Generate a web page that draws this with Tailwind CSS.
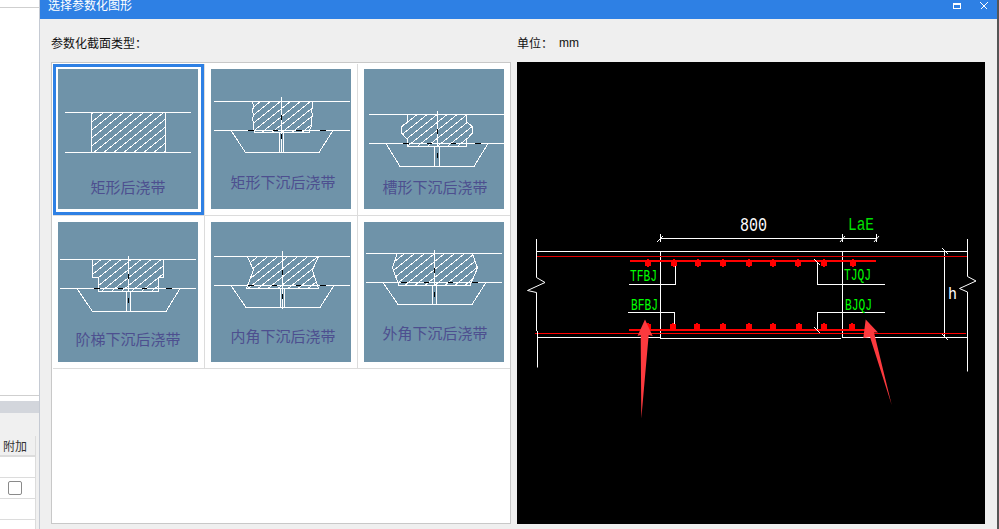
<!DOCTYPE html>
<html lang="zh-CN">
<head>
    <meta charset="UTF-8">
    <meta name="viewport" content="width=device-width, initial-scale=1.0">
    <title>选择参数化图形</title>
    <script src="https://cdn.jsdelivr.net/npm/@tailwindcss/browser@4"></script>
</head>
<body class="bg-white">
    <!-- shared shapes: thumbnail hatch and rebar dot -->
    <svg width="0" height="0" class="absolute">
        <defs>
            <pattern id="hatch" width="10" height="8" patternUnits="userSpaceOnUse">
                <path d="M0 8L10 0" stroke="#fff" stroke-width="1" fill="none" shape-rendering="crispEdges"/>
            </pattern>
            <g id="dot" fill="#f00" stroke="none" shape-rendering="crispEdges">
                <rect x="-3" y="-3" width="6" height="6"/>
                <rect x="-1" y="-4" width="2" height="8"/>
            </g>
        </defs>
    </svg>

    <div class="flex w-[999px] h-[529px] overflow-hidden font-['Noto_Sans_CJK_SC','Noto_Sans',sans-serif]">
        <!-- window behind the dialog -->
        <div class="w-[39px] h-full flex flex-col bg-white">
            <div class="h-[8px] border-b border-[#cfcfcf]"></div>
            <div class="h-[388px] border-b border-[#cfcfcf]"></div>
            <div class="h-[5px]"></div>
            <div class="h-[12px] bg-[#d3d6dc]"></div>
            <div class="h-[23px] bg-[#f0f0f0]"></div>
            <div class="flex-1 flex">
                <div class="w-[35px] flex flex-col">
                    <div class="h-[21px] bg-[#f0f0f0] border-b-2 border-[#dcdcdc] text-[12px] leading-[20px] text-[#333] pl-[3px]">附加</div>
                    <div class="h-[21px] border-b border-[#dcdcdc]"></div>
                    <div class="h-[21px] border-b border-[#dcdcdc] flex items-center pl-[8px]">
                        <div class="w-[14px] h-[14px] bg-white border border-[#8a8a8a] rounded-[2px]"></div>
                    </div>
                    <div class="h-[21px] border-b border-[#dcdcdc]"></div>
                </div>
                <div class="flex-1 bg-[#f0f0f0] border-l border-[#dcdcdc]"></div>
            </div>
        </div>

        <!-- dialog -->
        <div class="w-[958px] h-full flex flex-col bg-[#efefef] border-l border-[#c5cad3]">
            <div class="h-[19px] shrink-0 bg-[#2e80e4] flex items-start overflow-hidden text-white">
                <span class="ml-[8px] text-[12px] leading-[10px]">选择参数化图形</span>
                <div class="ml-auto flex items-start">
                    <div class="mt-[3px] w-[8px] h-[6px] border border-t-2 border-white"></div>
                    <svg class="ml-[19px] mr-[9px] mt-[2px]" width="8" height="8" viewBox="0 0 8 8" shape-rendering="crispEdges">
                        <path d="M0.5 0.5L7.5 7.5M7.5 0.5L0.5 7.5" stroke="#fff" stroke-width="1.4"/>
                    </svg>
                </div>
            </div>

            <div class="flex-1 flex pl-[11px]">
                <!-- section types -->
                <div class="w-[460px]">
                    <div class="h-[43px] pt-[14px] text-[12px] leading-[20px] text-[#111]">参数化截面类型：</div>
                    <div class="h-[462px] bg-white border border-[#c8c8c8] pl-[1px] pt-[1px]">
                        <div class="grid grid-cols-[152px_153px_152px] grid-rows-[152px_153px]">
                            <div class="border-r border-b border-[#dcdcdc]">
                                <div class="border-[3px] border-[#2e80e4] pl-[2px] pt-[2px] h-full">
                                    <svg class="block bg-[#6f93a9]" width="140" height="140" viewBox="0 0 140 140" shape-rendering="crispEdges" fill="none" stroke="#fff">
                                        <path d="M33.5 43.5H107V83.5H33.5Z" fill="url(#hatch)"/>
                                        <path d="M7 43.5H133M7 83.5H133"/>
                                        <text x="70" y="124" text-anchor="middle" font-size="15" fill="#4d4f8f" stroke="none">矩形后浇带</text>
                                    </svg>
                                </div>
                            </div>
                            <div class="border-r border-b border-[#dcdcdc] pl-[6px] pt-[5px]">
                                <svg class="block bg-[#6f93a9]" width="140" height="140" viewBox="0 0 140 140" shape-rendering="crispEdges" fill="none" stroke="#fff">
                                    <path d="M41 32.5L43 37L41 42L43 46L41 50L43 54L42 58L43 61.5V63.5H98V61.5L100 58L101 54L100 50L102 46L100 42L102 37L101 32.5Z" fill="url(#hatch)"/>
                                    <path d="M3 32.5H139M3 61.5H139M20 61.5L34.5 83.5H108L122 61.5M68.5 63.5V83.5M72.5 63.5V83.5M70.5 28V84"/>
                                    <path d="M37 61.5H43M62 61.5H67M85 61.5H91M109 61.5H115M70.5 46V51M70.5 65V70" stroke="#000"/>
                                    <text x="72" y="119" text-anchor="middle" font-size="15" fill="#4d4f8f" stroke="none">矩形下沉后浇带</text>
                                </svg>
                            </div>
                            <div class="border-b border-[#dcdcdc] pl-[6px] pt-[5px]">
                                <svg class="block bg-[#6f93a9]" width="140" height="140" viewBox="0 0 140 140" shape-rendering="crispEdges" fill="none" stroke="#fff">
                                    <path d="M43.5 45.5H102.5V52.5L108.5 58V64L102.5 70.5V77.5H43.5V70.5L37.5 64V58L43.5 52.5Z" fill="url(#hatch)"/>
                                    <path d="M5 45.5H140M5 74.5H140M22 74.5L36 97.5H110L124 74.5M70.5 77.5V97.5M75.5 77.5V97.5M73.5 42V77"/>
                                    <path d="M39 74.5H45M63 74.5H68M87 74.5H92M111 74.5H117M73.5 60V65M73.5 84V89" stroke="#000"/>
                                    <text x="71" y="124" text-anchor="middle" font-size="15" fill="#4d4f8f" stroke="none">槽形下沉后浇带</text>
                                </svg>
                            </div>
                            <div class="border-r border-b border-[#dcdcdc] pl-[5px] pt-[6px]">
                                <svg class="block bg-[#6f93a9]" width="140" height="140" viewBox="0 0 140 140" shape-rendering="crispEdges" fill="none" stroke="#fff">
                                    <path d="M34.5 37.5H105.5V55.5H100.5V69.5H40.5V55.5H34.5Z" fill="url(#hatch)"/>
                                    <path d="M2 37.5H138M2 66.5H138M19 66.5L34.5 89.5H108L122 66.5M68.5 69.5V89.5M72.5 69.5V89.5M70.5 34V69"/>
                                    <path d="M36 66.5H42M60 66.5H65M84 66.5H89M108 66.5H114M70.5 52V57M70.5 76V81" stroke="#000"/>
                                    <text x="70" y="123" text-anchor="middle" font-size="15" fill="#4d4f8f" stroke="none">阶梯下沉后浇带</text>
                                </svg>
                            </div>
                            <div class="border-r border-b border-[#dcdcdc] pl-[6px] pt-[6px]">
                                <svg class="block bg-[#6f93a9]" width="140" height="140" viewBox="0 0 140 140" shape-rendering="crispEdges" fill="none" stroke="#fff">
                                    <path d="M36.5 34.5H107.5L101.5 48L107.5 66.5H35.5L42.5 48Z" fill="url(#hatch)"/>
                                    <path d="M3 34.5H139M3 63.5H139M20 63.5L35 85.5H109L123 63.5M69.5 66.5V85.5M73.5 66.5V85.5M71.5 29V87"/>
                                    <path d="M37 63.5H43M61 63.5H66M85 63.5H90M109 63.5H115M71.5 48V53M71.5 72V77" stroke="#000"/>
                                    <text x="72" y="120" text-anchor="middle" font-size="15" fill="#4d4f8f" stroke="none">内角下沉后浇带</text>
                                </svg>
                            </div>
                            <div class="border-b border-[#dcdcdc] pl-[6px] pt-[6px]">
                                <svg class="block bg-[#6f93a9]" width="140" height="140" viewBox="0 0 140 140" shape-rendering="crispEdges" fill="none" stroke="#fff">
                                    <path d="M33 31.5H108.5L113.5 46L106 63.5H35L28.5 46Z" fill="url(#hatch)"/>
                                    <path d="M2 31.5H138M2 60.5H138M19 60.5L34 82.5H108L122 60.5M68.5 63.5V82.5M72.5 63.5V82.5M70.5 28V63"/>
                                    <path d="M37 60.5H43M60 60.5H65M84 60.5H89M108 60.5H114M70.5 46V51M70.5 70V75" stroke="#000"/>
                                    <text x="71" y="117" text-anchor="middle" font-size="15" fill="#4d4f8f" stroke="none">外角下沉后浇带</text>
                                </svg>
                            </div>
                        </div>
                    </div>
                </div>

                <!-- drawing preview -->
                <div class="w-[468px] ml-[6px]">
                    <div class="h-[43px] pt-[14px] text-[12px] leading-[20px] text-[#111] flex">
                        <span class="w-[42px]">单位：</span>
                        <span class="font-['Liberation_Sans',sans-serif]">mm</span>
                    </div>
                    <svg class="block bg-black" width="468" height="462" viewBox="517 62 468 462" fill="none" stroke="#fff" font-family="'Liberation Mono',monospace">
                        <g shape-rendering="crispEdges">
                            <path d="M536.5 251.5H967.5M537.5 337.5H660M660 338.5H841M842 337.5H967.5"/>
                            <path d="M660.5 238.5H876.5M660.5 234V242M842.5 234V242M876.5 234V242M660.5 251V338M842.5 251V338M944.5 251V338"/>
                            <path d="M628.5 284.5H675.5V264M628 312.5H674.5V324M817.5 262V284.5H885M885 312.5H817.5V330"/>
                            <path d="M537 256.5H967" stroke="#e00000"/>
                            <path d="M535 333.5H966" stroke="#f00"/>
                            <path d="M630 261H876M629 330H866" stroke="#f00" stroke-width="2"/>
                        </g>
                        <path d="M536.5 239V277.5L545 282.5L527.5 290.5L536.5 292.5V331M537.5 331V367.5M967.5 239V276.5L976 281L959.5 288.5L967.5 292V371.5"/>
                        <path d="M657 242L663 236M840 242L845 236M874 242L879 236M942 248L948 254M942 334L948 340M814 259L820 265M814 327L820 333"/>

                        <!-- rebar dots -->
                        <use href="#dot" x="648" y="263"/><use href="#dot" x="674" y="263"/><use href="#dot" x="698" y="263"/>
                        <use href="#dot" x="723" y="263"/><use href="#dot" x="749" y="263"/><use href="#dot" x="773" y="263"/>
                        <use href="#dot" x="798" y="263"/><use href="#dot" x="824" y="263"/><use href="#dot" x="853" y="263"/>
                        <use href="#dot" x="648" y="327"/><use href="#dot" x="673" y="327"/><use href="#dot" x="697" y="327"/>
                        <use href="#dot" x="723" y="327"/><use href="#dot" x="749" y="327"/><use href="#dot" x="773" y="327"/>
                        <use href="#dot" x="799" y="327"/><use href="#dot" x="824" y="327"/><use href="#dot" x="852" y="327"/>

                        <g stroke="none" fill="#0f0" font-size="16">
                            <text x="630" y="281" textLength="27" lengthAdjust="spacingAndGlyphs">TFBJ</text>
                            <text x="631" y="310" textLength="27" lengthAdjust="spacingAndGlyphs">BFBJ</text>
                            <text x="844" y="280" textLength="27" lengthAdjust="spacingAndGlyphs">TJQJ</text>
                            <text x="845" y="310" textLength="27" lengthAdjust="spacingAndGlyphs">BJQJ</text>
                            <text x="848" y="230" font-size="19" fill="#00e000" textLength="26" lengthAdjust="spacingAndGlyphs">LaE</text>
                        </g>
                        <text x="740" y="231" font-size="20" fill="#fff" stroke="none" textLength="27" lengthAdjust="spacingAndGlyphs">800</text>
                        <text x="948" y="299" font-size="17" fill="#fff" stroke="none" textLength="9" lengthAdjust="spacingAndGlyphs">h</text>

                        <!-- hand-drawn arrows -->
                        <path d="M645 319.5L637.5 336L640.7 335L641.3 418.5L648.7 335L652.7 336Z" fill="#fc3a3e" stroke="none"/>
                        <path d="M865.7 319.5L878 332.5L874 332.5L891.7 405L870 337L863.3 338Z" fill="#fc3a3e" stroke="none"/>
                    </svg>
                </div>
            </div>
        </div>

        <!-- desktop showing at the edge -->
        <div class="w-[2px] h-full bg-[#555]"></div>
    </div>
</body>
</html>
